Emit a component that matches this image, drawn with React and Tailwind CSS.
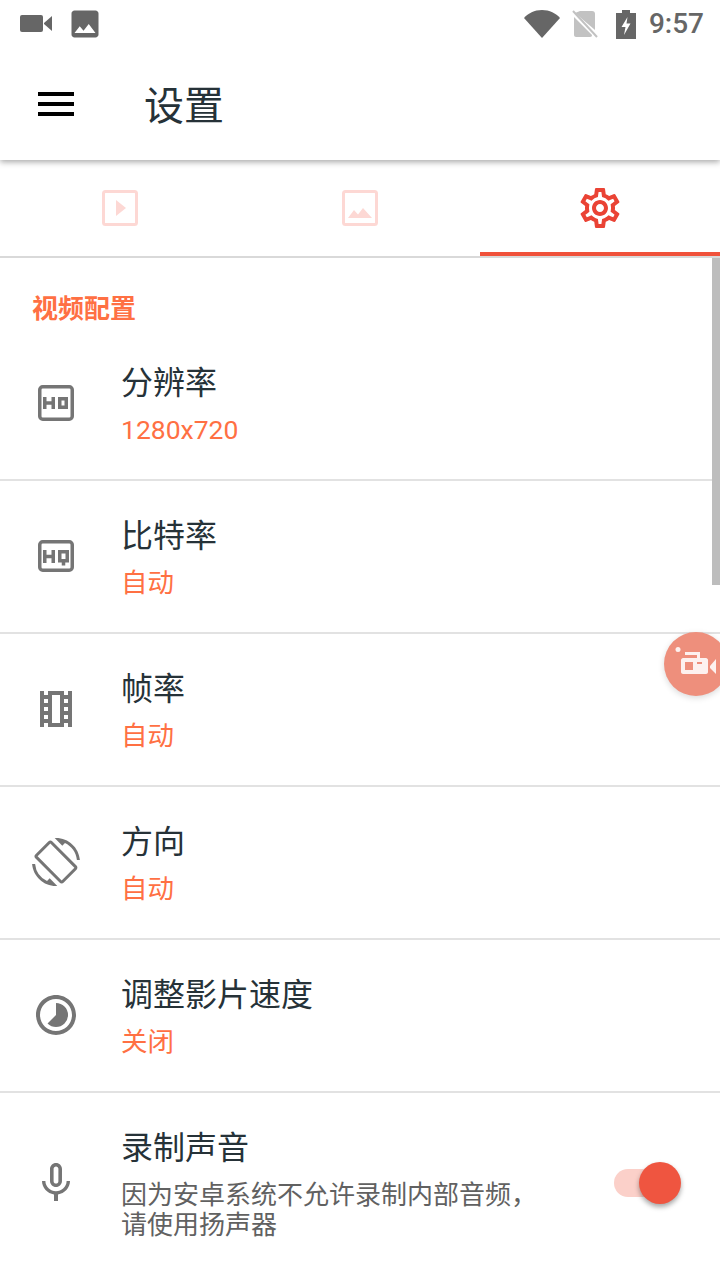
import {
  MdMenu,
  MdPhoto,
  MdOutlineSettings,
  MdOutlineLocalMovies,
  MdScreenRotation,
  MdTimelapse,
  MdMicNone,
} from "react-icons/md";

function VideoStatusIcon() {
  return (
    <svg width="32" height="18" viewBox="0 0 32 18" className="text-[#666666]" fill="currentColor">
      <rect x="0" y="0" width="23" height="17" rx="2" />
      <path d="M24 8 L32 1 V16 L24 9 Z" />
    </svg>
  );
}

function WifiIcon() {
  return (
    <svg width="36" height="28" viewBox="0 0 36 28" fill="#666666">
      <path d="M18 28 L0 8 C4 3.5 10.5 0 18 0 C25.5 0 32 3.5 36 8 Z" />
    </svg>
  );
}

function SimOffIcon() {
  return (
    <svg width="26" height="28" viewBox="0 0 26 28">
      <path d="M8 1 H20 C22 1 23 2 23 4 V20 L3 3 Z" fill="#c2c2c2" />
      <path d="M2 7 L20 25 C20 26 19.5 27 18 27 H4 C3 27 2 26 2 25 Z" fill="#c2c2c2" />
      <path d="M1 1 L25 27" stroke="#c2c2c2" strokeWidth="2" />
    </svg>
  );
}

function BatteryIcon() {
  return (
    <svg width="20" height="29" viewBox="0 0 20 29" fill="#666666">
      <path d="M6 0 H14 V3 H20 V29 H0 V3 H6 Z" />
      <path d="M11.5 7 L5.5 17 H9.5 L8 25 L14.5 13.5 H10.5 Z" fill="#ffffff" />
    </svg>
  );
}

function PlayBoxIcon() {
  return (
    <svg width="36" height="36" viewBox="0 0 36 36" fill="none">
      <rect x="1.5" y="1.5" width="33" height="33" rx="2" stroke="#fdd8d4" strokeWidth="3" />
      <path d="M14 10 L24 18 L14 26 Z" fill="#fdd8d4" />
    </svg>
  );
}

function ImageBoxIcon() {
  return (
    <svg width="36" height="36" viewBox="0 0 36 36" fill="none">
      <rect x="1.5" y="1.5" width="33" height="33" rx="2" stroke="#fdd8d4" strokeWidth="3" />
      <path d="M6 28 L12 20 L16 24.5 L21 18 L30 28 Z" fill="#fdd8d4" />
    </svg>
  );
}

function HdIcon() {
  return (
    <svg width="36" height="36" viewBox="0 0 36 36" fill="none" stroke="#757575">
      <rect x="1.75" y="1.75" width="32.5" height="32.5" rx="3" strokeWidth="3.5" />
      <path d="M6.75 12 V24 M15.25 12 V24 M6.75 18 H15.25" strokeWidth="3.5" />
      <path d="M21.75 13.75 H28.25 V22.25 H21.75 Z" strokeWidth="3.5" />
    </svg>
  );
}

function HqIcon() {
  return (
    <svg width="36" height="32" viewBox="0 0 36 32" fill="none" stroke="#757575">
      <rect x="1.75" y="1.75" width="32.5" height="28.5" rx="3" strokeWidth="3.5" />
      <path d="M6.75 10 V23 M15.25 10 V23 M6.75 16.5 H15.25" strokeWidth="3.5" />
      <path d="M21.75 11.75 H29.25 V20.75 H21.75 Z M25.5 20 V25.5" strokeWidth="3.5" />
    </svg>
  );
}

function FloatingCamera() {
  return (
    <svg width="44" height="30" viewBox="0 0 44 30" fill="#ffffff" fillOpacity="0.88">
      <circle cx="3" cy="2.500" r="2.500" />
      <path d="M10 5 H25 V11 H31 C32 11 33 12 33 13 V25 C33 26 32 27 31 27 H8 C7 27 6 26 6 25 V13 C6 12 7 11 8 11 H22 V8 H10 Z" />
      <path d="M35 19 L41 12 V27 L35 21 Z" />
      <rect x="10" y="15" width="8" height="8" fill="#ee8f7c" fillOpacity="1" />
      <rect x="22" y="15" width="5" height="2" fill="#ee8f7c" fillOpacity="1" />
    </svg>
  );
}

const ROWS = [
  { title: "分辨率", sub: "1280x720", icon: <HdIcon /> },
  { title: "比特率", sub: "自动", icon: <HqIcon /> },
  { title: "帧率", sub: "自动", icon: <MdOutlineLocalMovies size={48} color="#757575" /> },
  { title: "方向", sub: "自动", icon: <MdScreenRotation size={48} color="#757575" /> },
  { title: "调整影片速度", sub: "关闭", icon: <MdTimelapse size={48} color="#757575" /> },
];

function Row({ title, sub, icon }) {
  return (
    <div className="flex items-center h-[153px] border-b-2 border-[#e2e2e2]">
      <div className="w-[112px] pb-px flex justify-center shrink-0">{icon}</div>
      <div className="pl-[9px] pt-[4px]">
        <div className="text-[32px] leading-[38px] text-[#263238]">{title}</div>
        <div className="mt-[10px] text-[26.5px] leading-[36px] text-[#ff7043]">{sub}</div>
      </div>
    </div>
  );
}

export default function App() {
  return (
    <div
      className="relative w-[720px] h-[1280px] overflow-hidden bg-white flex flex-col"
      style={{ fontFamily: 'Roboto, "Noto Sans CJK SC", sans-serif' }}
    >
      {/* status bar */}
      <div className="relative z-20 h-12 shrink-0 flex items-center pl-5 pr-4 bg-white">
        <VideoStatusIcon />
        <MdPhoto size={36} color="#666666" className="ml-[15px]" />
        <div className="ml-auto flex items-center">
          <WifiIcon />
          <div className="ml-[12px]"><SimOffIcon /></div>
          <div className="ml-[18px]"><BatteryIcon /></div>
          <span className="ml-[13px] text-[28px] leading-none font-medium text-[#666666]">9:57</span>
        </div>
      </div>

      {/* header */}
      <div className="relative z-10 h-[112px] shrink-0 flex items-center bg-white shadow-[0_2px_6px_rgba(0,0,0,0.35)]">
        <div className="w-[112px] flex justify-center"><MdMenu size={48} color="#000000" /></div>
        <h1 className="ml-[32px] pt-[6px] text-[40px] font-normal leading-none text-[#263238]">设置</h1>
      </div>

      {/* tabs */}
      <div className="h-[98px] shrink-0 grid grid-cols-3 border-b-2 border-[#d9d9d9]">
        <div className="flex items-center justify-center"><PlayBoxIcon /></div>
        <div className="flex items-center justify-center"><ImageBoxIcon /></div>
        <div className="flex items-center justify-center pt-[4px] border-b-4 border-[#f0513a]">
          <MdOutlineSettings size={48} color="#ea4335" />
        </div>
      </div>

      {/* settings list */}
      <div className="h-[70px] shrink-0 pl-[32px] pt-[33px] text-[26px] leading-[36px] font-bold text-[#ff7043]">视频配置</div>
      {ROWS.map((r) => (
        <Row key={r.title} {...r} />
      ))}
      <div className="flex items-center pt-[36px] pb-[25px]">
        <div className="w-[112px] pb-[3px] flex justify-center shrink-0"><MdMicNone size={48} color="#757575" /></div>
        <div className="pl-[9px] flex-1 min-w-0">
          <div className="text-[32px] leading-[38px] text-[#263238]">录制声音</div>
          <div className="mt-[13px] text-[26px] leading-[30px] text-[#616161]">
            因为安卓系统不允许录制内部音频，
            <br />
            请使用扬声器
          </div>
        </div>
        <div className="relative mr-[39px] mb-[3px] w-[67px] h-[42px] shrink-0 flex items-center">
          <div className="w-[56px] h-[28px] rounded-full bg-[#fbd0c9]" />
          <div className="absolute right-0 top-0 w-[42px] h-[42px] rounded-full bg-[#ef5540] shadow-[0_3px_5px_rgba(0,0,0,0.35)]" />
        </div>
      </div>

      {/* scrollbar */}
      <div className="absolute right-0 top-[258px] w-2 h-[327px] bg-[#bdbdbd]" />

      {/* floating recorder button */}
      <div className="absolute left-[664px] top-[632px] w-16 h-16 rounded-full bg-[#ee8f7c] shadow-[0_2px_6px_rgba(0,0,0,0.15)] flex items-start pl-[11px] pt-[15px]">
        <FloatingCamera />
      </div>
    </div>
  );
}
